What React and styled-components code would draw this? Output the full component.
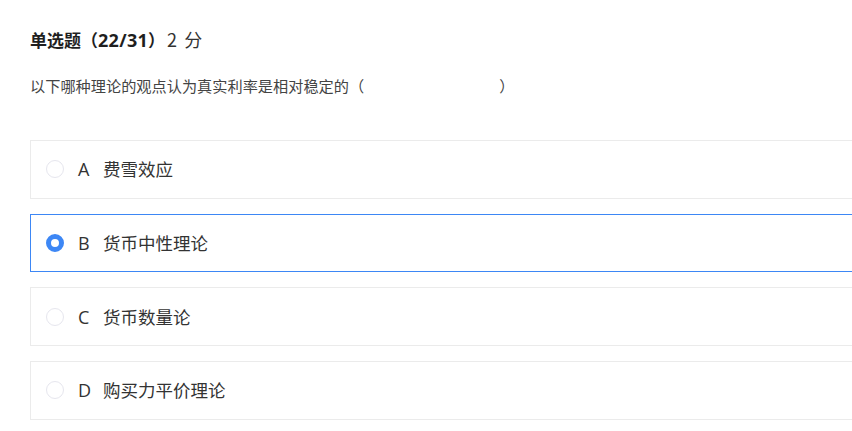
import React, { useState } from "react";
import styled, { createGlobalStyle } from "styled-components";

const GlobalStyle = createGlobalStyle`
    html, body {
        margin: 0;
        padding: 0;
        background: #fff;
        overflow: hidden;
    }
    body {
        font-family: "Noto Sans CJK SC", "Noto Sans", sans-serif;
        color: #333;
    }
`;

const options = [
    { key: "A", text: "费雪效应" },
    { key: "B", text: "货币中性理论" },
    { key: "C", text: "货币数量论" },
    { key: "D", text: "购买力平价理论" },
];

const App = () => {
    const [picked, setPicked] = useState("B");

    return (
        <>
            <GlobalStyle />
            <Page>
                <Title>
                    单选题（<Num>22/31</Num>）<Score>2 分</Score>
                </Title>
                <Question>
                    以下哪种理论的观点认为真实利率是相对稳定的（<Blank />）
                </Question>
                <OptionList>
                    {options.map((o) => (
                        <Option
                            key={o.key}
                            $active={picked === o.key}
                            onClick={() => setPicked(o.key)}
                        >
                            <Radio $active={picked === o.key} />
                            <Letter>{o.key}</Letter>
                            <OptionText>{o.text}</OptionText>
                        </Option>
                    ))}
                </OptionList>
            </Page>
        </>
    );
};

export default App;

const Page = styled.div`
    padding: 28px 0 0 30px;
`;

const Title = styled.div`
    height: 22px;
    font-size: 17px;
    line-height: 22px;
    font-weight: 700;
    color: #1f1f1f;
    white-space: nowrap;
`;

const Num = styled.span`
    font-family: "Open Sans", "Noto Sans", sans-serif;
    font-size: 18px;
    line-height: 22px;
    letter-spacing: 0.3px;
`;

const Score = styled.span`
    margin-left: 2px;
    font-weight: 400;
    color: #333;
    font-size: 18px;
    line-height: 22px;
    word-spacing: 3px;
`;

const Question = styled.div`
    margin-top: 24px;
    font-size: 15.2px;
    line-height: 22px;
    color: #444;
`;

const Blank = styled.span`
    display: inline-block;
    width: 135px;
`;

const OptionList = styled.div`
    margin-top: 44px;
    display: flex;
    flex-direction: column;
    gap: 15px;
`;

const Option = styled.div`
    box-sizing: border-box;
    width: 860px;
    height: 58.67px;
    display: flex;
    align-items: center;
    padding-left: 15px;
    border: 1px solid ${(p) => (p.$active ? "#3d87f5" : "#ebebeb")};
    cursor: pointer;
    font-size: 17.5px;
    color: #333;
`;

const Radio = styled.span`
    box-sizing: border-box;
    width: 18px;
    height: 18px;
    border-radius: 50%;
    border: ${(p) => (p.$active ? "5px solid #3d87f5" : "1px solid #e6e6ee")};
    background: #fff;
    flex-shrink: 0;
`;

const Letter = styled.span`
    margin-left: 14px;
    width: 25px;
    font-family: "Open Sans", "Noto Sans", sans-serif;
    font-size: 18px;
`;

const OptionText = styled.span`
    line-height: 24px;
`;
